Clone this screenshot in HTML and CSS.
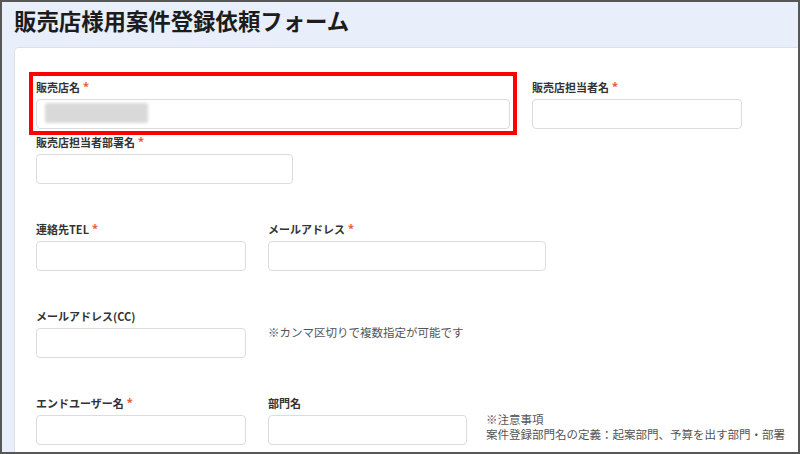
FILE: index.html
```html
<!DOCTYPE html>
<html lang="ja">
<head>
<meta charset="utf-8">
<title>販売店様用案件登録依頼フォーム</title>
<link rel="stylesheet" href="styles.css">
</head>
<body>
<div class="frame">
  <header class="head">
    <h1 class="title">販売店様用案件登録依頼フォーム</h1>
  </header>
  <main class="card">
    <div class="row">
      <div class="field w474">
        <label class="label">販売店名<span class="req">*</span></label>
        <div class="input"><span class="blur"></span></div>
        <div class="mark"></div>
      </div>
      <div class="field w210">
        <label class="label">販売店担当者名<span class="req">*</span></label>
        <div class="input"></div>
      </div>
    </div>
    <div class="row row-close">
      <div class="field w257">
        <label class="label">販売店担当者部署名<span class="req">*</span></label>
        <div class="input"></div>
      </div>
    </div>
    <div class="row">
      <div class="field w210">
        <label class="label">連絡先TEL<span class="req">*</span></label>
        <div class="input"></div>
      </div>
      <div class="field w278">
        <label class="label">メールアドレス<span class="req">*</span></label>
        <div class="input"></div>
      </div>
    </div>
    <div class="row">
      <div class="field w210">
        <label class="label">メールアドレス(CC)</label>
        <div class="input"></div>
      </div>
      <p class="note">※カンマ区切りで複数指定が可能です</p>
    </div>
    <div class="row">
      <div class="field w210">
        <label class="label">エンドユーザー名<span class="req">*</span></label>
        <div class="input"></div>
      </div>
      <div class="field w199">
        <label class="label">部門名</label>
        <div class="input"></div>
      </div>
      <p class="note note-tight">※注意事項<br>案件登録部門名の定義：起案部門、予算を出す部門・部署</p>
    </div>
  </main>
</div>
</body>
</html>
```

FILE: styles.css
```css
* { box-sizing: border-box; }
html, body { margin: 0; padding: 0; }
body {
  width: 800px;
  height: 454px;
  overflow: hidden;
  background: #fff;
  font-family: "Noto Sans CJK JP", "Noto Sans", sans-serif;
}
.frame {
  width: 800px;
  height: 454px;
  border: 2px solid #575757;
  background: #e9eefb;
  overflow: hidden;
}
.head {
  height: 45px;
  padding-left: 12px;
}
.title {
  margin: 0;
  font-size: 22.4px;
  font-weight: 700;
  line-height: 37px;
  color: #1c1c1c;
  white-space: nowrap;
}
.card {
  margin-left: 12px;
  margin-right: -20px;
  height: 430px;
  background: #fff;
  border: 1px solid #dcdfe6;
  border-radius: 4px 0 0 0;
  padding: 31px 0 0 21px;
}
.row {
  display: flex;
  gap: 22px;
  align-items: flex-start;
}
.row + .row { margin-top: 37px; }
.row.row-close { margin-top: 5px; }
.field { position: relative; flex: none; }
.w474 { width: 474px; }
.w210 { width: 210px; }
.w257 { width: 257px; }
.w278 { width: 278px; }
.w199 { width: 199px; }
.label {
  display: block;
  height: 16px;
  font-size: 11px;
  font-weight: 700;
  line-height: 16px;
  color: #333;
  margin-bottom: 4px;
  white-space: nowrap;
}
.req {
  color: #ea5a32;
  font-weight: 700;
  margin-left: 3px;
  vertical-align: 2px;
  line-height: 1;
  font-family: "Noto Sans", sans-serif;
}
.input {
  height: 30px;
  border: 1px solid #dcdcdc;
  border-radius: 4px;
  background: #fff;
}
.blur {
  display: block;
  width: 103px;
  height: 20px;
  margin: 3px 0 0 8px;
  background: #d9d9d9;
  filter: blur(1.5px);
  border-radius: 2px;
}
.mark {
  position: absolute;
  top: -7px;
  left: -7px;
  right: -7px;
  bottom: -6px;
  border: 4px solid #ff0000;
  pointer-events: none;
}
.note {
  margin: 17px 0 0 0;
  font-size: 11.5px;
  line-height: 15px;
  color: #555;
  white-space: nowrap;
}
.note-tight { margin-left: -3px; }
```
